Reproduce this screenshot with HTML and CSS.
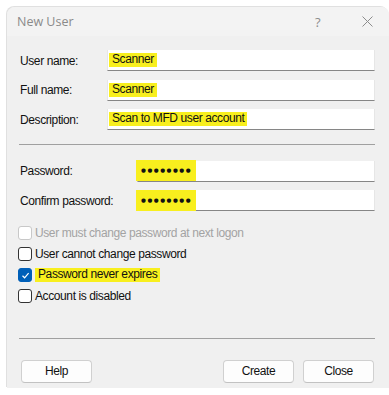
FILE: index.html
```html
<!DOCTYPE html>
<html lang="en">
<head>
    <meta charset="UTF-8">
    <meta name="viewport" content="width=device-width, initial-scale=1.0">
    <title>New User</title>
    <link rel="stylesheet" href="styles.css">
</head>
<body>

<div class="dialog">
    <div class="titlebar">
        <span class="title">New User</span>
        <span class="title-help">?</span>
        <span class="title-close">
            <svg width="11" height="11" viewBox="0 0 11 11"><path d="M0.5 0.5 L10.5 10.5 M10.5 0.5 L0.5 10.5" stroke="#8c8c8c" stroke-width="1" fill="none"/></svg>
        </span>
    </div>

    <div class="content">
        <div class="fields names">
            <span class="label">User name:</span>
            <div class="textbox"><span class="mark">Scanner</span></div>
            <span class="label">Full name:</span>
            <div class="textbox"><span class="mark">Scanner</span></div>
            <span class="label">Description:</span>
            <div class="textbox"><span class="mark">Scan to MFD user account</span></div>
        </div>

        <div class="separator"></div>

        <div class="fields passwords">
            <span class="label">Password:</span>
            <div class="textbox"><span class="mark dots">●●●●●●●●</span></div>
            <span class="label">Confirm password:</span>
            <div class="textbox"><span class="mark dots">●●●●●●●●</span></div>
        </div>

        <div class="options">
            <div class="option disabled"><span class="box"></span><span>User must change password at next logon</span></div>
            <div class="option"><span class="box"></span><span>User cannot change password</span></div>
            <div class="option"><span class="box checked">
                <svg width="9" height="9" viewBox="0 0 9 9"><path d="M1.5 4.8 L3.6 6.8 L7.6 2.2" stroke="#fff" stroke-width="1.2" fill="none"/></svg>
            </span><span class="mark">Password never expires</span></div>
            <div class="option"><span class="box"></span><span>Account is disabled</span></div>
        </div>

        <div class="separator bottom"></div>

        <div class="buttons">
            <button class="btn">Help</button>
            <span class="spacer"></span>
            <button class="btn">Create</button>
            <button class="btn">Close</button>
        </div>
    </div>
</div>

</body>
</html>
```

FILE: styles.css
```css
:root {
    --dialog-bg: #f0f0f0;
    --title-bg: #f3f3f3;
    --text-color: #111;
    --disabled-color: #a3a3a3;
    --marker: #f8ef1e;
    --line-color: #a0a0a0;
    --accent: #005fb8;
}

body, html {
    margin: 0;
    background: #fff;
    font-family: "Liberation Sans", Arial, sans-serif;
    font-size: 12px;
    color: var(--text-color);
}

.dialog {
    margin: 7px 0 0 7px;
    width: 382px;
    height: 381px;
    background: var(--dialog-bg);
    border-top-left-radius: 8px;
    border-top-right-radius: 8px;
    box-shadow: -1px -1px 0 rgba(0, 0, 0, 0.12);
    overflow: hidden;
}

.titlebar {
    display: flex;
    align-items: center;
    height: 29px;
    padding-left: 10px;
    background: var(--title-bg);
}

.title {
    flex: 1;
    font-family: "Open Sans", "Noto Sans", sans-serif;
    font-size: 12.5px;
    color: #8a8a8a;
}

.title-help {
    width: 47px;
    font-family: "Open Sans", sans-serif;
    font-size: 13px;
    color: #8c8c8c;
}

.title-close {
    display: flex;
    width: 27px;
}

.content {
    display: flex;
    flex-direction: column;
    padding: 14px 14px 0 12px;
}

.fields {
    display: grid;
    row-gap: 8.5px;
    align-items: center;
}

.names {
    grid-template-columns: 88px 1fr;
}

.passwords {
    grid-template-columns: 118px 1fr;
}

.label {
    padding-left: 1px;
    letter-spacing: -0.4px;
}

.textbox {
    display: flex;
    align-items: center;
    height: 20px;
    padding-left: 1px;
    background: #fff;
    border: 1px solid #e6e6e6;
    border-bottom: 1px solid #868686;
    border-top: 0;
    letter-spacing: -0.4px;
}

.mark {
    background: var(--marker);
    padding: 0 3px 1px;
    line-height: 13px;
}

.dots {
    font-family: "DejaVu Sans", sans-serif;
    font-size: 5.6px;
    letter-spacing: 1.5px;
    padding: 4px 4px 4px 5px;
    margin-left: -3px;
}

.separator {
    height: 1px;
    background: var(--line-color);
    margin: 14px 0 15.5px;
}

.separator.bottom {
    margin: 31px 0 21px;
}

.options {
    display: flex;
    flex-direction: column;
    margin-top: 11.5px;
    letter-spacing: -0.4px;
}

.option {
    display: flex;
    align-items: center;
    height: 21px;
    gap: 3px;
}

.option.disabled {
    color: var(--disabled-color);
}

.box {
    display: flex;
    align-items: center;
    justify-content: center;
    width: 12px;
    height: 12px;
    margin-left: -1px;
    border: 1px solid #333;
    border-radius: 3px;
    background: #fff;
}

.option.disabled .box {
    border-color: #c8c8c8;
}

.box.checked {
    background: var(--accent);
    border-color: var(--accent);
}

.buttons {
    display: flex;
    gap: 9px;
    padding: 0 1px 0 2px;
}

.spacer {
    flex: 1;
}

.btn {
    width: 71px;
    height: 23px;
    padding: 0;
    font-family: "Liberation Sans", Arial, sans-serif;
    font-size: 12px;
    letter-spacing: -0.4px;
    color: var(--text-color);
    background: #fdfdfd;
    border: 1px solid #d0d0d0;
    border-bottom-color: #c2c2c2;
    border-radius: 4px;
}
```
